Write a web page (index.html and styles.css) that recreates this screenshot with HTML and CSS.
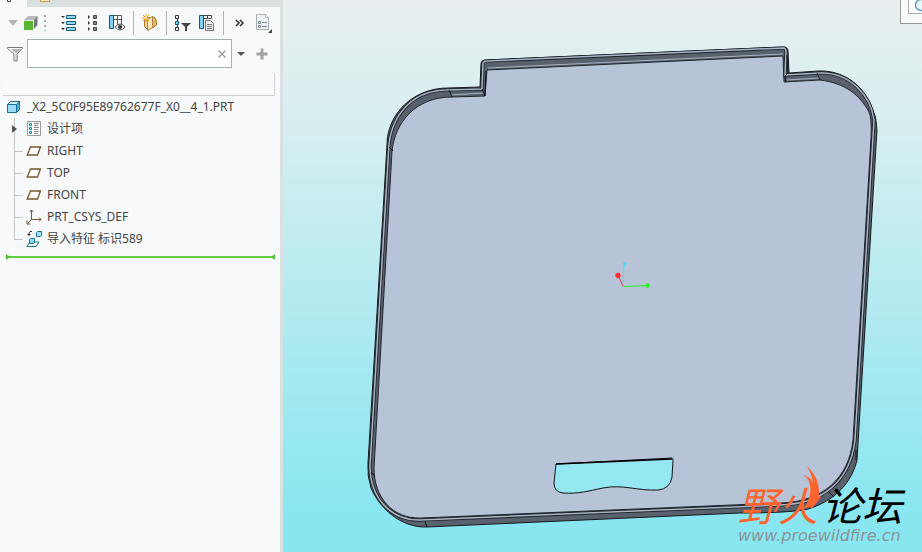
FILE: index.html
```html
<!DOCTYPE html>
<html lang="zh-CN">
<head>
<meta charset="utf-8">
<meta name="viewport" content="width=device-width, initial-scale=1">
<title>_X2_5C0F95E89762677F_X0__4_1.PRT</title>
<link rel="stylesheet" href="styles.css">
</head>
<body>
<div class="app">
  <aside class="sidebar">
    <div class="tabs">
      <div class="tab"><svg width="12" height="6" viewBox="0 0 12 6"><path d="M1.500 0v1.500h3V0" fill="none" stroke="#444"/></svg></div>
      <svg width="12" height="6" viewBox="0 0 12 6"><path d="M1.500 0v1.500h9V0" fill="#fbe7bd" stroke="#c99a45"/></svg>
    </div>
    <div class="toolbar">
      <button class="tool arrow" aria-label="展开"><svg width="10" height="8" viewBox="0 0 10 8"><path d="M0 1h10L5 7z" fill="#b4b4b4"/></svg></button>
      <button class="tool cube" aria-label="模型"><svg width="14" height="14" viewBox="0 0 14 14"><path d="M0 4 4 0h9.500L10 4z" fill="#b5b9b9"/><path d="M10 4l3.500-4v9L10 13z" fill="#747a7a"/><path d="M0 4h10v10H0z" fill="#e9eeee"/><path d="M0 5h9v9H0z" fill="#58b530"/></svg></button>
      <span class="grip"></span>
      <button class="tool" aria-label="全部展开"><svg width="16" height="16" viewBox="0 0 16 16"><path d="M0 1h4L2 3zM0 7h4L2 9zM0 13h4l-2 2z" fill="#333"/><path d="M5.500.5h9v3h-9zM5.500 6.500h9v3h-9zM5.500 12.500h9v3h-9z" fill="#93d9f6" stroke="#12577a"/></svg></button>
      <button class="tool" aria-label="全部折叠"><svg width="10" height="16" viewBox="0 0 10 16"><path d="M0 0l2 2-2 2zM0 6l2 2-2 2zM0 12l2 2-2 2z" fill="#333"/><path d="M5.500.5h3v3h-3zM5.500 6.500h3v3h-3zM5.500 12.500h3v3h-3z" fill="#888" stroke="#444"/></svg></button>
      <button class="tool" aria-label="显示列"><svg width="16" height="16" viewBox="0 0 16 16"><path d="M4.500.5h8v13h-8z" fill="#fff"/><path d="M4 .5h8.500V9M4 4.500h8M8.500 0v10" fill="none" stroke="#555"/><path d="M.5.5h4v13h-4z" fill="#83d2f5" stroke="#12577a"/><path d="M6 12q5-6 10 0q-5 6-10 0z" fill="#eee" stroke="#555"/><circle cx="11" cy="12" r="2" fill="#333"/></svg></button>
      <span class="sep"></span>
      <button class="tool" aria-label="新建层"><svg width="16" height="18" viewBox="0 0 16 18"><path d="M10 3h2q3 2 2.500 8l-4 3z" fill="#e6b964" stroke="#a9742c"/><path d="M2.500 5.500l3-2h5v9l-5 3-3-3z" fill="#f2cf8c" stroke="#a9742c"/><path d="M5.500 5.500l5-3v11l-5 3z" fill="#fbe8bd" stroke="#b9873f"/><path d="M4 0v8M0 4h8M1 1l6 6M7 1L1 7" stroke="#f29900"/><circle cx="4" cy="4" r="1" fill="#fff"/></svg></button>
      <span class="sep"></span>
      <button class="tool" aria-label="树过滤器"><svg width="16" height="16" viewBox="0 0 16 16"><path d="M2.500 3v10" stroke="#333"/><path d="M.5.5h3v3h-3zM.5 12.500h3v3h-3z" fill="#fff" stroke="#333"/><path d="M.5 6.500h3v3h-3z" fill="#78cff5" stroke="#12577a"/><path d="M6 8h10l-4 4v4h-2v-4z" fill="#444"/></svg></button>
      <button class="tool" aria-label="树列"><svg width="16" height="16" viewBox="0 0 16 16"><path d="M.5.5h4v13h-4z" fill="#83d2f5" stroke="#12577a"/><path d="M4.500.5h8v3h-8zM8.500 0v4" fill="#fff" stroke="#444"/><path d="M6.500 5.500h5l3 3v7h-8z" fill="#eee" stroke="#777"/><path d="M8 9.500h5M8 11.500h5M8 13.500h5" stroke="#777"/></svg></button>
      <span class="sep"></span>
      <button class="tool" aria-label="更多"><svg width="10" height="8" viewBox="0 0 10 8"><path d="M1 1l3 3-3 3M5 1l3 3-3 3" fill="none" stroke="#333" stroke-width="1.500"/></svg></button>
      <button class="tool" aria-label="设置"><svg width="17" height="19" viewBox="0 0 17 19"><path d="M.5.5h9l3 3v12H.5z" fill="#eef2f4" stroke="#a8afb3"/><path d="M9.500.5v3h3" fill="#fff" stroke="#a8afb3"/><path d="M6 8.500h5M6 12.500h5" stroke="#7c8890"/><path d="M2.500 7.500h2v2h-2zM2.500 11.500h2v2h-2z" fill="#fff" stroke="#7c8890"/><path d="M16 15v4h-4z" fill="#444"/></svg></button>
    </div>
    <div class="search">
      <svg width="16" height="16" viewBox="0 0 16 16"><path d="M.5 1.500h15v1L10 8v7H7V8L.5 2.500z" fill="#fff" stroke="#777"/><path d="M8.500 8h1v6h-1zM4 3h11l-5 4H8z" fill="#b5b5b5"/></svg>
      <div class="field">
        <input type="text" aria-label="搜索模型树">
        <button class="clear" aria-label="清除"><svg width="8" height="8" viewBox="0 0 8 8"><path d="M.5.5l7 7M7.500.5l-7 7" stroke="#9a9a9a" stroke-width="1.300"/></svg></button>
      </div>
      <button class="tool small" aria-label="选项"><svg width="8" height="4" viewBox="0 0 8 4"><path d="M0 0h8L4 4z" fill="#555"/></svg></button>
      <button class="tool" aria-label="添加"><svg width="12" height="12" viewBox="0 0 12 12"><path d="M6 .5v11M.5 6h11" stroke="#a0a0a0" stroke-width="3"/></svg></button>
    </div>
    <div class="column-head"></div>
    <ul class="tree">
      <li class="root"><svg width="14" height="14" viewBox="0 0 14 14"><path d="M.5 4.500l3-3h9l-3 3z" fill="#d8f2fd" stroke="#176f94"/><path d="M9.500 4.500l3-3v8l-3 3z" fill="#4fb5df" stroke="#176f94"/><path d="M.5 4.500h9v8h-9z" fill="#9bddf9" stroke="#176f94"/></svg><span>_X2_5C0F95E89762677F_X0__4_1.PRT</span></li>
      <li class="node group"><svg width="16" height="16" viewBox="0 0 16 16"><path d="M1.500.5h13v14h-13z" fill="#fff" stroke="#999"/><path d="M3.500 2.500h2v2h-2zM3.500 6.500h2v2h-2zM3.500 10.500h2v2h-2z" fill="#c2ecfd" stroke="#1687b2"/><path d="M8 2.500h5M8 4.500h4M8 6.500h5M8 8.500h4M8 10.500h5M8 12.500h4" stroke="#888"/></svg><span>设计项</span></li>
      <li class="node"><svg width="16" height="16" viewBox="0 0 16 16"><path d="M4.500 4h10l-3 8H1.200z" fill="#fff" stroke="#76582c" stroke-width="1.300"/></svg><span>RIGHT</span></li>
      <li class="node"><svg width="16" height="16" viewBox="0 0 16 16"><path d="M4.500 4h10l-3 8H1.200z" fill="#fff" stroke="#76582c" stroke-width="1.300"/></svg><span>TOP</span></li>
      <li class="node"><svg width="16" height="16" viewBox="0 0 16 16"><path d="M4.500 4h10l-3 8H1.200z" fill="#fff" stroke="#76582c" stroke-width="1.300"/></svg><span>FRONT</span></li>
      <li class="node"><svg width="16" height="16" viewBox="0 0 16 16"><path d="M5.500 1v9.500H15M5.500 10.500l-4 4M3.500 3l2-2 2 2M13 8.500l2 2-2 2M1 11.500V15h3.500" fill="none" stroke="#76582c"/></svg><span>PRT_CSYS_DEF</span></li>
      <li class="node last"><svg width="16" height="16" viewBox="0 0 16 16"><path d="M10.500 1.500l1-1h4v4l-1 1h-4z" fill="#9fe0fa" stroke="#176f94"/><path d="M6 .5H4q-1 0-1 3" fill="none" stroke="#333"/><path d="M1 3h4L3 5z" fill="#333"/><path d="M1 15.500L4 11h9l-3 4.500z" fill="#fff" stroke="#176f94"/><path d="M3.500 8.500l1-1h4v4l-1 1h-4z" fill="#8fd8f8" stroke="#176f94"/></svg><span>导入特征 标识589</span></li>
    </ul>
    <div class="insert-line"></div>
  </aside>
  <main class="viewport">
    <svg class="model" viewBox="283 0 639 552" preserveAspectRatio="xMinYMin meet" role="img" aria-label="零件模型">
      <path d="M481 63Q482 60 485 60L783 47Q788 47 788 51L789 73L818 71C842 70 862 84 871 105Q877 117 877 130L857 460C852 481 837 500 808 509Q790 513 740 513L427 527C400 528 379 507 371 488Q367 476 368 463L387 145C387 114 413 88 448 88L480 87z" fill="#59616c" stroke="#15191f"/>
      <path d="M487 70L783 56L784 82L820 80C845 83 860 95 869 112Q872 118 871 138L853 440C849 478 823 502 780 503L421 518C392 519 374 497 374 468L392 151C395 123 415 97 452 97L485 96z" fill="#b7c3d6" stroke="#20252d"/>
      <path d="M483 63Q484 61 487 61L783 48Q786 48 786 52L785 75L820 73C850 72 871 96 874 120L855 440C850 482 822 504 780 505L421 520C391 521 370 498 370 466L389 144C393 112 415 90 447 90L482 89z" fill="none" stroke="#1b2027" stroke-width="3.200"/>
      <path d="M483 63Q484 61 487 61L783 48Q786 48 786 52L785 75L820 73C850 72 871 96 874 120L855 440C850 482 822 504 780 505L421 520C391 521 370 498 370 466L389 144C393 112 415 90 447 90L482 89z" fill="none" stroke="#abb7c7" stroke-width="1.500"/>
      <path d="M488 68L783 54M451 95L484 93M786 80L820 78" fill="none" stroke="#a7b3c4"/>
      <path d="M449 90l3 7M389 147l4 4M817 73l3 7M371 472l3 3M425 521l2 6M828 491l6 6M856 450v10M482 89l3 7 1-25M785 76l3-3-1-18M785 76l1 6" fill="none" stroke="#0c0e12"/>
      <path d="M556 464L672 458Q673 458 673 460L672 477Q670 489 658 490C637 491 623 484 603 488C588 491 579 494 563 493Q554 492 554 483z" fill="#95e7f1" stroke="#10151a"/>
      <path d="M556 464L672 459" stroke="#000" stroke-width="1.500"/>
      <g fill="none"><path d="M623 286l1-22" stroke="#35eaff"/><path d="M623 286l-5-11" stroke="#ff3440"/><path d="M623 286.500l25-1" stroke="#22f020"/></g>
      <circle cx="624.500" cy="264" r="1.800" fill="#35eaff"/><circle cx="618" cy="275.500" r="2.700" fill="#ff2d35"/><circle cx="647.500" cy="285.500" r="2.200" fill="#22f020"/>
    </svg>
    <div class="view-tools"><button class="zoom" aria-label="放大"><svg width="16" height="14" viewBox="0 0 16 14"><circle cx="8" cy="5" r="5.500" fill="#e8fafe" stroke="#6a9bb8" stroke-width="1.500"/><path d="M12 9l4 4" stroke="#555" stroke-width="3"/></svg></button></div>
    <div class="watermark">
      <div class="brand"><span class="fire">野火</span><span>论坛</span>
        <svg class="flame" width="18" height="44" viewBox="0 0 18 44"><path d="M5 0C12 7 17 15 17 26C17 34 12 42 2 42C8 34 10 24 7 16Q6 12 1 9Q9 11 11 17Q10 9 5 0z" fill="#ff642f"/></svg>
      </div>
      <div class="site">www.proewildfire.cn</div>
    </div>
  </main>
</div>
</body>
</html>
```
FILE: styles.css
```css
* { box-sizing: border-box; }
body { margin: 0; font: 12px/22px "Noto Sans", "Noto Sans CJK SC", sans-serif; color: #444; }
.app { display: grid; grid-template-columns: 283px 1fr; min-height: 100vh; }
svg { display: block; flex: none; }
button { display: flex; align-items: center; justify-content: center; padding: 0; border: 0; background: none; }

.sidebar { background: #f7f9fb; border-right: 3px solid #dadfdf; }
.tabs { display: flex; gap: 12px; height: 7px; background: #d9dede; }
.tab { width: 27px; padding-left: 6px; background: #f7f9fb; }
.toolbar { display: flex; align-items: center; height: 32px; padding-left: 6px; }
.tool { width: 24px; height: 24px; }
.arrow { width: 14px; }
.cube { width: 22px; }
.grip { width: 2px; height: 16px; margin: 0 11px 0 2px; background: repeating-linear-gradient(#aaa 0 2px, transparent 2px 5px); }
.sep { width: 1px; height: 24px; margin: 0 4px; background: #b1b5b6; }
.search { display: flex; align-items: center; padding-left: 7px; }
.field { display: flex; width: 205px; height: 29px; margin-left: 4px; border: 1px solid #a5afb2; background: #fff; }
.field input { flex: 1; min-width: 0; border: 0; padding: 0 4px; background: none; outline: 0; font: inherit; }
.clear { width: 18px; }
.small { width: 18px; }
.column-head { height: 23px; margin: 5px 5px 0 3px; border: solid #ccd1d3; border-width: 0 1px 1px 0; background: #fafafa; }

.tree { margin: 0; padding: 0; list-style: none; }
.tree li { display: flex; align-items: center; height: 22px; white-space: nowrap; }
.root { padding-left: 7px; gap: 6px; }
.node { position: relative; padding-left: 26px; gap: 5px; }
.node::before { content: ""; position: absolute; left: 14px; top: 0; bottom: 0; border-left: 1px solid #c2c4c6; }
.node::after { content: ""; position: absolute; left: 14px; top: 11px; width: 9px; border-top: 1px solid #c2c4c6; }
.last::before { bottom: 10px; }
.group::after { left: 12px; top: 7px; width: 0; border: solid transparent; border-width: 4px 0 4px 5px; border-left-color: #555; }
.insert-line { position: relative; height: 2px; margin: 6px 5px 0 6px; background: #62cc45; }
.insert-line::before, .insert-line::after { content: ""; position: absolute; top: -2px; border: solid transparent; border-width: 3px 0 3px 4px; border-left-color: #52c035; }
.insert-line::before { left: 0; }
.insert-line::after { right: 0; transform: scaleX(-1); }

.viewport { position: relative; overflow: hidden; background: linear-gradient(#e9eff0, #d5eef0 25%, #8ae6f0 92%, #86e6f0); }
.model { width: 100%; height: auto; }
.view-tools { position: absolute; top: 0; right: 0; width: 22px; height: 24px; padding-left: 7px; overflow: hidden; border: solid #999; border-width: 0 0 1px 1px; background: #f7f9fb; }
.zoom { width: 24px; height: 14px; border: solid #aaa; border-width: 0 0 1px 1px; background: #fff; }
.watermark { position: absolute; right: 20px; bottom: 6px; color: #000; }
.brand { position: relative; display: flex; justify-content: flex-end; gap: 4px; font: italic 400 40px/44px "Noto Sans CJK SC", sans-serif; }
.fire { color: #ff642f; }
.flame { position: absolute; right: 82px; top: -16px; }
.site { color: #8b9498; font: italic 16px/20px "DejaVu Sans", sans-serif; }
```
